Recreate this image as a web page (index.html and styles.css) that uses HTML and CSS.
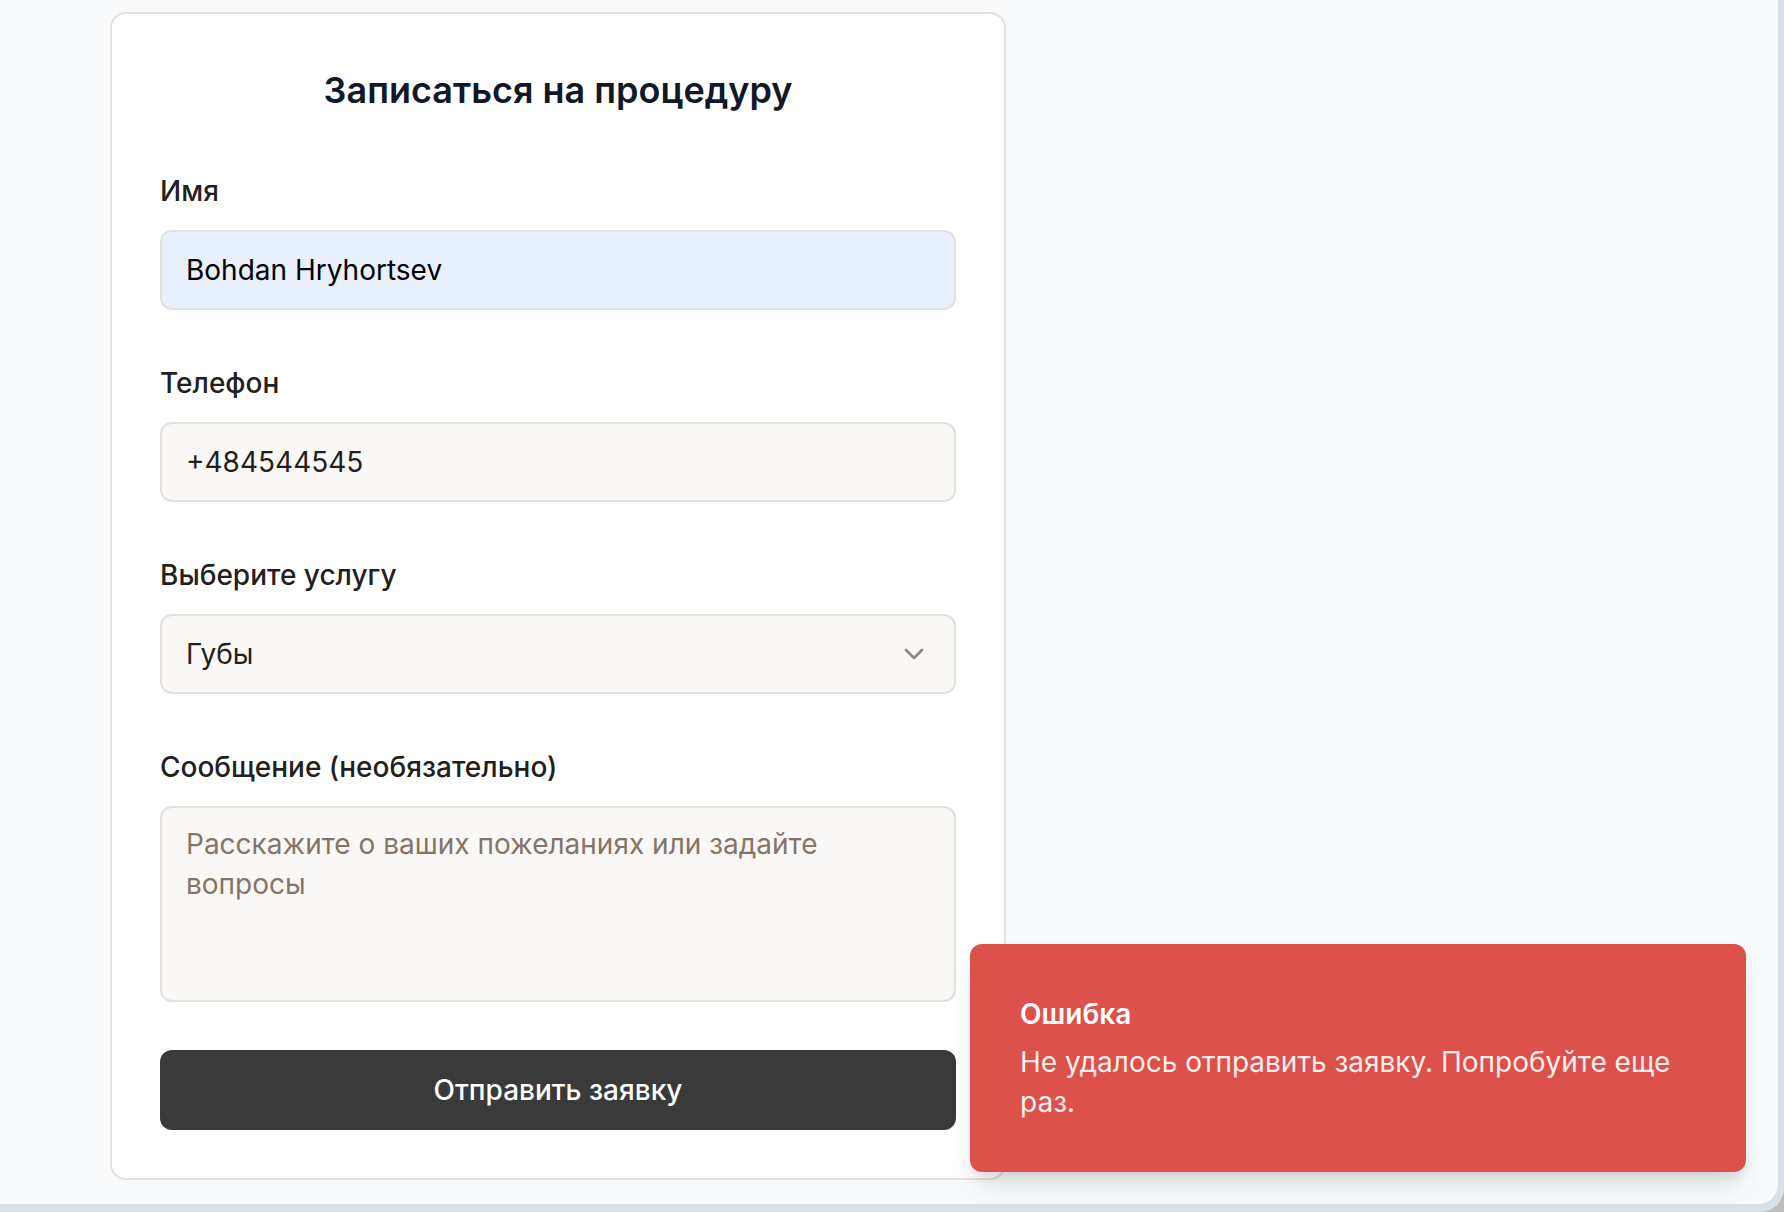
FILE: index.html
```html
<!DOCTYPE html>
<html lang="ru">
<head>
  <meta charset="utf-8">
  <meta name="viewport" content="width=device-width, initial-scale=1">
  <title>Записаться на процедуру</title>
  <link rel="stylesheet" href="styles.css">
</head>
<body>
  <div class="window">
    <main class="page">
      <form class="card">
        <h1 class="card-title">Записаться на процедуру</h1>
        <div class="field">
          <label class="label" for="name">Имя</label>
          <input class="control control-autofilled" id="name" type="text" value="Bohdan Hryhortsev">
        </div>
        <div class="field">
          <label class="label" for="phone">Телефон</label>
          <input class="control" id="phone" type="tel" value="+484544545">
        </div>
        <div class="field">
          <label class="label" for="service">Выберите услугу</label>
          <div class="select">
            <select class="control" id="service">
              <option selected>Губы</option>
            </select>
            <svg class="chevron" viewBox="0 0 24 24" aria-hidden="true"><path d="m6 9 6 6 6-6"/></svg>
          </div>
        </div>
        <div class="field">
          <label class="label" for="message">Сообщение (необязательно)</label>
          <textarea class="control control-area" id="message" rows="4" placeholder="Расскажите о ваших пожеланиях или задайте вопросы"></textarea>
        </div>
        <button class="submit" type="button">Отправить заявку</button>
      </form>
    </main>
    <div class="toast" role="alert">
      <strong class="toast-title">Ошибка</strong>
      <p class="toast-text">Не удалось отправить заявку. Попробуйте еще раз.</p>
    </div>
  </div>
</body>
</html>
```
FILE: styles.css
```css
* {
  box-sizing: border-box;
}

body {
  margin: 0;
  background: #bdbdbd;
  font-family: Inter, "Liberation Sans", sans-serif;
  font-size: 28px;
  line-height: 40px;
  color: #231f1c;
}

.window {
  position: relative;
  display: flex;
  min-height: 100vh;
  overflow: hidden;
  border: solid #d9e1e8;
  border-width: 0 6px 8px 0;
  border-radius: 0 0 24px 0;
  background: #d9e1e8;
}

.page {
  flex: 1;
  padding: 12px 24px 24px 110px;
  border-radius: 0 0 20px 0;
  background: #f9fafc;
}

.card {
  display: flex;
  flex-direction: column;
  gap: 48px;
  max-width: 896px;
  padding: 48px;
  border: 2px solid #e4e1db;
  border-radius: 16px;
  background: #fff;
}

.card-title {
  margin: 0;
  font-size: 36px;
  font-weight: 600;
  line-height: 56px;
  text-align: center;
  color: #111827;
}

.field {
  display: flex;
  flex-direction: column;
  gap: 14px;
}

.label {
  font-weight: 500;
  line-height: 50px;
}

.control {
  display: block;
  width: 100%;
  height: 80px;
  margin: 0;
  padding: 16px 24px;
  border: 2px solid #e4e1db;
  border-radius: 12px;
  background: #f9f8f6;
  font: inherit;
  color: inherit;
  appearance: none;
}

.control-autofilled {
  background: #e8effd;
  color: #000;
}

.control-area {
  height: auto;
  resize: none;
}

.control::placeholder {
  color: #857468;
  opacity: 1;
}

.select {
  position: relative;
}

.chevron {
  position: absolute;
  top: 24px;
  right: 26px;
  width: 32px;
  height: 32px;
  fill: none;
  stroke: #8b8987;
  stroke-width: 2;
  stroke-linecap: round;
  stroke-linejoin: round;
  pointer-events: none;
}

.submit {
  height: 80px;
  padding: 16px 32px;
  border: 0;
  border-radius: 12px;
  background: #3a3a3a;
  font: inherit;
  font-weight: 500;
  color: #fff;
}

.toast {
  position: absolute;
  right: 32px;
  bottom: 32px;
  display: flex;
  flex-direction: column;
  gap: 8px;
  width: 776px;
  max-width: calc(100% - 64px);
  padding: 50px;
  border-radius: 12px;
  background: #dc514a;
  box-shadow: 0 20px 30px -6px rgba(0, 0, 0, 0.1), 0 8px 12px -4px rgba(0, 0, 0, 0.1);
  color: #fff;
}

.toast-title {
  font-weight: 600;
}

.toast-text {
  margin: 0;
  opacity: 0.9;
}
```
